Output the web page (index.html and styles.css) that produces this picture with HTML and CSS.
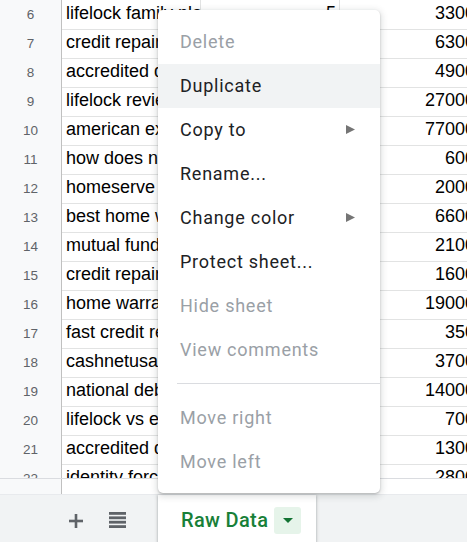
FILE: index.html
```html
<!DOCTYPE html>
<html>
<head>
<meta charset="utf-8">
<link rel="stylesheet" href="styles.css">
</head>
<body>
<div class="app">
  <div class="grid">
    <div class="rows">
      <div class="row"><div class="rh">6</div><div class="c">lifelock family plan</div><div class="c num">5</div><div class="c num">3300</div></div>
      <div class="row"><div class="rh">7</div><div class="c">credit repair services</div><div class="c num">4</div><div class="c num">6300</div></div>
      <div class="row"><div class="rh">8</div><div class="c">accredited debt relief</div><div class="c num">3</div><div class="c num">4900</div></div>
      <div class="row"><div class="rh">9</div><div class="c">lifelock reviews</div><div class="c num">2</div><div class="c num">27000</div></div>
      <div class="row"><div class="rh">10</div><div class="c">american express</div><div class="c num">1</div><div class="c num">77000</div></div>
      <div class="row"><div class="rh">11</div><div class="c">how does national debt relief work</div><div class="c num">6</div><div class="c num">600</div></div>
      <div class="row"><div class="rh">12</div><div class="c">homeserve reviews</div><div class="c num">7</div><div class="c num">2000</div></div>
      <div class="row"><div class="rh">13</div><div class="c">best home warranty</div><div class="c num">8</div><div class="c num">6600</div></div>
      <div class="row"><div class="rh">14</div><div class="c">mutual fund</div><div class="c num">9</div><div class="c num">2100</div></div>
      <div class="row"><div class="rh">15</div><div class="c">credit repair companies</div><div class="c num">3</div><div class="c num">1600</div></div>
      <div class="row"><div class="rh">16</div><div class="c">home warranty</div><div class="c num">2</div><div class="c num">19000</div></div>
      <div class="row"><div class="rh">17</div><div class="c">fast credit repair</div><div class="c num">5</div><div class="c num">350</div></div>
      <div class="row"><div class="rh">18</div><div class="c">cashnetusa</div><div class="c num">4</div><div class="c num">3700</div></div>
      <div class="row"><div class="rh">19</div><div class="c">national debt relief</div><div class="c num">1</div><div class="c num">14000</div></div>
      <div class="row"><div class="rh">20</div><div class="c">lifelock vs experian</div><div class="c num">6</div><div class="c num">700</div></div>
      <div class="row"><div class="rh">21</div><div class="c">accredited debt relief reviews</div><div class="c num">3</div><div class="c num">1300</div></div>
      <div class="row"><div class="rh">22</div><div class="c">identity force</div><div class="c num">2</div><div class="c num">2800</div></div>
    </div>
  </div>
  <div class="strip"><div class="strip-head"></div><div class="strip-body"></div></div>
  <div class="bar">
    <button class="icon-btn plus" aria-label="Add sheet">
      <svg width="14" height="14" viewBox="0 0 14 14"><rect x="5.7" y="0" width="2.6" height="14" fill="#5f6368"/><rect x="0" y="5.7" width="14" height="2.6" fill="#5f6368"/></svg>
    </button>
    <button class="icon-btn list" aria-label="All sheets">
      <svg width="17" height="16" viewBox="0 0 17 16"><rect x="0" y="0" width="17" height="2.8" fill="#5f6368"/><rect x="0" y="4.4" width="17" height="2.8" fill="#5f6368"/><rect x="0" y="8.8" width="17" height="2.8" fill="#5f6368"/><rect x="0" y="13.2" width="17" height="2.8" fill="#5f6368"/></svg>
    </button>
    <div class="tab">
      <span class="tab-name">Raw Data</span>
      <span class="tab-drop"><svg width="10" height="5" viewBox="0 0 10 5"><polygon points="0,0 10,0 5,5" fill="#137333"/></svg></span>
    </div>
  </div>
  <div class="menu">
    <div class="item disabled">Delete</div>
    <div class="item hover">Duplicate</div>
    <div class="item sub">Copy to<svg class="arrow" width="9" height="9" viewBox="0 0 9 9"><polygon points="0,0 9,4.5 0,9" fill="#757575"/></svg></div>
    <div class="item">Rename...</div>
    <div class="item sub">Change color<svg class="arrow" width="9" height="9" viewBox="0 0 9 9"><polygon points="0,0 9,4.5 0,9" fill="#757575"/></svg></div>
    <div class="item">Protect sheet...</div>
    <div class="item disabled">Hide sheet</div>
    <div class="item disabled">View comments</div>
    <div class="sep"><div class="sep-line"></div></div>
    <div class="item disabled">Move right</div>
    <div class="item disabled">Move left</div>
  </div>
</div>
</body>
</html>
```
FILE: styles.css
```css
* { box-sizing: border-box; }
html, body { margin: 0; padding: 0; }
body { width: 467px; height: 542px; overflow: hidden; background: #fff; }
.app { position: relative; width: 467px; height: 542px; overflow: hidden; display: flex; flex-direction: column; }

.grid { height: 478px; overflow: hidden; flex: none; }
.rows { margin-top: -1px; }
.row { display: grid; grid-template-columns: 62px 139px 139px 139px; height: 29px; }
.rh {
  background: #f8f9fa;
  border-right: 1px solid #c0c0c0;
  border-bottom: 1px solid #c0c0c0;
  color: #5f6368;
  font: 13.5px "Liberation Sans", Arial, sans-serif;
  text-align: center;
  line-height: 28px;
  padding-top: 2px;
}
.c {
  border-right: 1px solid #e2e3e3;
  border-bottom: 1px solid #e2e3e3;
  font: 18px "Liberation Sans", Arial, sans-serif;
  color: #000;
  line-height: 28px;
  white-space: nowrap;
  overflow: hidden;
  padding: 0 4px;
}
.num { text-align: right; padding-right: 3px; }

.strip { height: 16px; flex: none; display: flex; border-top: 1px solid #dadce0; }
.strip-head { width: 62px; background: #f8f9fa; border-right: 1px solid #c0c0c0; }
.strip-body { flex: 1; background: #fff; }

.bar {
  flex: 1;
  background: #f1f3f4;
  display: flex;
  align-items: center;
  border-top: 1px solid #e8eaed;
}
.icon-btn { border: 0; background: none; padding: 0; display: flex; align-items: center; justify-content: center; }
.plus { margin-left: 69px; margin-top: 4px; }
.list { margin-left: 26px; margin-top: 3px; }
.tab {
  margin-left: 32px;
  align-self: stretch;
  width: 158px;
  background: #fff;
  box-shadow: 0 1px 3px 1px rgba(60,64,67,.15), 0 1px 2px rgba(60,64,67,.3);
  display: flex;
  align-items: center;
  padding: 3px 0 0 23px;
}
.tab-name {
  font: 500 20px Roboto, "Liberation Sans", sans-serif;
  color: #188038;
  letter-spacing: 0.35px;
}
.tab-drop {
  margin-left: 6px;
  width: 27px;
  height: 27px;
  border-radius: 3px;
  background: #e6f4ea;
  display: flex;
  align-items: center;
  justify-content: center;
}

.menu {
  position: absolute;
  left: 158px;
  top: 10px;
  width: 222px;
  height: 483px;
  background: #fff;
  border-radius: 5px;
  box-shadow: 0 2px 6px 2px rgba(60,64,67,.15), 0 1px 2px rgba(60,64,67,.3);
  padding: 10px 0 9px;
  z-index: 5;
}
.item {
  height: 44px;
  display: flex;
  align-items: center;
  padding-left: 22px;
  padding-right: 25px;
  padding-bottom: 1px;
  font: 18px Roboto, "Liberation Sans", sans-serif;
  letter-spacing: 0.75px;
  color: #202124;
}
.item.hover { background: #f1f3f4; }
.item.disabled { color: #9aa0a6; }
.item.sub { justify-content: space-between; }
.sep { padding: 11px 0 12px 19px; }
.sep-line { height: 1px; background: #dadce0; }
```
